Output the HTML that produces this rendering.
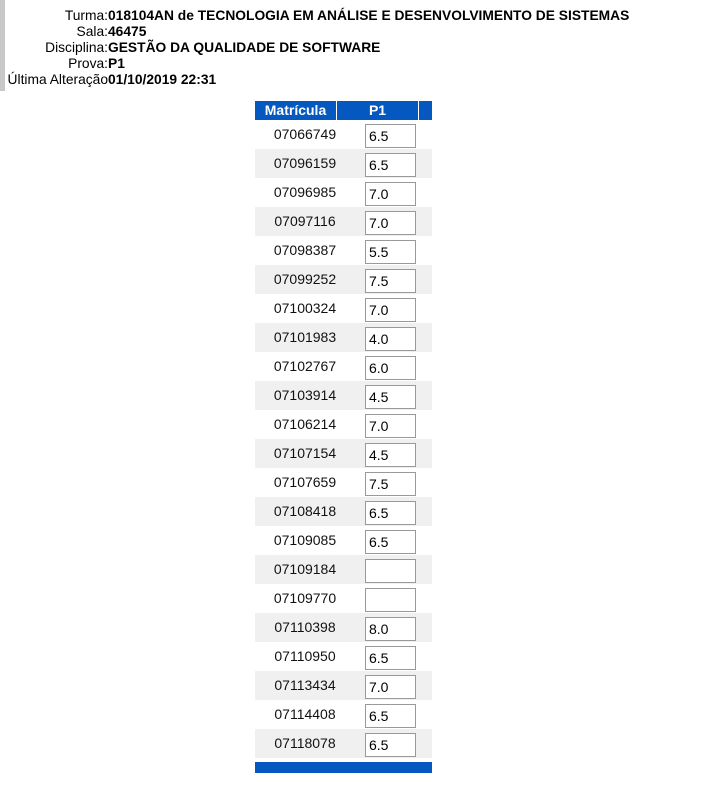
<!DOCTYPE html>
<html><head><meta charset="utf-8"><style>
body{margin:0;width:714px;height:810px;background:#fff;font-family:"Liberation Sans",Arial,sans-serif;position:relative;overflow:hidden}
.bar{position:absolute;left:0;top:0;width:5px;height:91px;background:#c8c8c8}
.hd{position:absolute;left:0;top:8px;font-size:13.8px;line-height:16px}
.hd div{white-space:nowrap}
.hd span.l{display:inline-block;width:108px;text-align:right}
.hd b{font-weight:bold}
.th{position:absolute;top:101px;height:19px;background:#0458bf;color:#fff;font-weight:bold;font-size:14px;line-height:19px;text-align:center}
.row{position:absolute;left:255px;width:177px;height:29px}
.row.s{background:#f0f0f0}
.m{position:absolute;left:0;width:100px;text-align:center;top:0;line-height:29px;font-size:14px;color:#111}
.in{position:absolute;left:110px;top:4px;border:1px solid #999;background:#fff;font-size:14px;line-height:23px;padding-left:3px;box-sizing:border-box;width:51px;height:24px}
.ft{position:absolute;left:255px;top:762px;width:177px;height:11px;background:#0458bf}
</style></head><body>
<div class="bar"></div>
<div class="hd">
<div><span class="l">Turma:</span><b>018104AN de TECNOLOGIA EM ANÁLISE E DESENVOLVIMENTO DE SISTEMAS</b></div>
<div><span class="l">Sala:</span><b>46475</b></div>
<div><span class="l">Disciplina:</span><b>GESTÃO DA QUALIDADE DE SOFTWARE</b></div>
<div><span class="l">Prova:</span><b>P1</b></div>
<div><span class="l">Última Alteração</span><b>01/10/2019 22:31</b></div>
</div>
<div class="th" style="left:255px;width:81px">Matrícula</div>
<div class="th" style="left:337px;width:81px">P1</div>
<div class="th" style="left:419px;width:13px"></div>
<div class="row" style="top:120px"><div class="m">07066749</div><div class="in">6.5</div></div>
<div class="row s" style="top:149px"><div class="m">07096159</div><div class="in">6.5</div></div>
<div class="row" style="top:178px"><div class="m">07096985</div><div class="in">7.0</div></div>
<div class="row s" style="top:207px"><div class="m">07097116</div><div class="in">7.0</div></div>
<div class="row" style="top:236px"><div class="m">07098387</div><div class="in">5.5</div></div>
<div class="row s" style="top:265px"><div class="m">07099252</div><div class="in">7.5</div></div>
<div class="row" style="top:294px"><div class="m">07100324</div><div class="in">7.0</div></div>
<div class="row s" style="top:323px"><div class="m">07101983</div><div class="in">4.0</div></div>
<div class="row" style="top:352px"><div class="m">07102767</div><div class="in">6.0</div></div>
<div class="row s" style="top:381px"><div class="m">07103914</div><div class="in">4.5</div></div>
<div class="row" style="top:410px"><div class="m">07106214</div><div class="in">7.0</div></div>
<div class="row s" style="top:439px"><div class="m">07107154</div><div class="in">4.5</div></div>
<div class="row" style="top:468px"><div class="m">07107659</div><div class="in">7.5</div></div>
<div class="row s" style="top:497px"><div class="m">07108418</div><div class="in">6.5</div></div>
<div class="row" style="top:526px"><div class="m">07109085</div><div class="in">6.5</div></div>
<div class="row s" style="top:555px"><div class="m">07109184</div><div class="in"></div></div>
<div class="row" style="top:584px"><div class="m">07109770</div><div class="in"></div></div>
<div class="row s" style="top:613px"><div class="m">07110398</div><div class="in">8.0</div></div>
<div class="row" style="top:642px"><div class="m">07110950</div><div class="in">6.5</div></div>
<div class="row s" style="top:671px"><div class="m">07113434</div><div class="in">7.0</div></div>
<div class="row" style="top:700px"><div class="m">07114408</div><div class="in">6.5</div></div>
<div class="row s" style="top:729px"><div class="m">07118078</div><div class="in">6.5</div></div>
<div class="ft"></div>
</body></html>
